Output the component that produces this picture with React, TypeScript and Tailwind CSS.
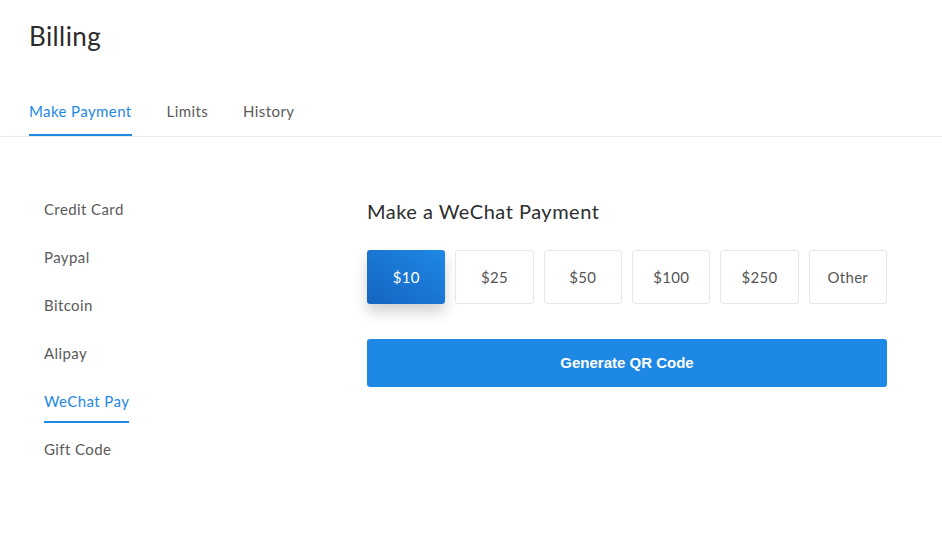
import { useState } from 'react';

// ─── Data ────────────────────────────────────────────────

const tabs = ['Make Payment', 'Limits', 'History'];
const methods = ['Credit Card', 'Paypal', 'Bitcoin', 'Alipay', 'WeChat Pay', 'Gift Code'];
const amounts = ['$10', '$25', '$50', '$100', '$250', 'Other'];

// ─── Component ───────────────────────────────────────────

export default function App() {
  const [tab, setTab] = useState('Make Payment');
  const [method, setMethod] = useState('WeChat Pay');
  const [amount, setAmount] = useState('$10');

  return (
    <div className="min-h-[560px] w-full bg-white font-['Lato','Open_Sans',sans-serif] text-[#333]">
      {/* Header */}
      <div className="px-[29px] pt-[20px]">
        <h1 className="text-[26px] leading-[32px] tracking-[0.4px] text-[#2b2b2b]">Billing</h1>
      </div>

      {/* Tab nav */}
      <div className="mt-[48px] flex gap-[35px] border-b border-[#ececec] px-[29px]">
        {tabs.map((t) => (
          <button
            key={t}
            type="button"
            onClick={() => setTab(t)}
            className={`border-b-2 pb-[12px] text-[15px] leading-[22px] tracking-[0.4px] ${
              tab === t ? 'border-[#1e88e5] text-[#1e88e5]' : 'border-transparent text-[#5a5a5a]'
            }`}
          >
            {t}
          </button>
        ))}
      </div>

      <div className="flex pt-[61px]">
        {/* Sidebar */}
        <div className="flex w-[367px] flex-col items-start gap-[15px] pl-[44px]">
          {methods.map((m) => (
            <button
              key={m}
              type="button"
              onClick={() => setMethod(m)}
              className={`border-b-2 pb-[9px] text-[15px] leading-[22px] tracking-[0.4px] ${
                method === m ? 'border-[#1e88e5] text-[#1e88e5]' : 'border-transparent text-[#5a5a5a]'
              }`}
            >
              {m}
            </button>
          ))}
        </div>

        {/* Payment panel */}
        <div className="w-[520px]">
          <h2 className="text-[20px] leading-[26px] tracking-[0.5px] text-[#2d2d2d]">
            Make a WeChat Payment
          </h2>

          <div className="mt-[26px] grid grid-cols-6 gap-[10px]">
            {amounts.map((a) => (
              <button
                key={a}
                type="button"
                onClick={() => setAmount(a)}
                className={`h-[54px] rounded-[3px] text-[15px] tracking-[0.3px] ${
                  amount === a
                    ? 'bg-gradient-to-tr from-[#1565c0] to-[#1e88e5] text-white shadow-[0_8px_14px_rgba(0,0,0,0.18)]'
                    : 'border border-[#e6e6e6] text-[#555]'
                }`}
              >
                {a}
              </button>
            ))}
          </div>

          <button
            type="button"
            className="mt-[35px] h-[48px] w-full rounded-[3px] bg-[#1e88e5] font-['Liberation_Sans',Arial,sans-serif] text-[15px] font-bold text-white"
          >
            Generate QR Code
          </button>
        </div>
      </div>
    </div>
  );
}
